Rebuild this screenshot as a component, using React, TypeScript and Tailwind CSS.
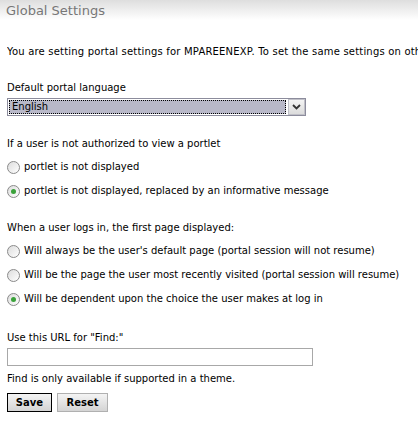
const font = { fontFamily: '"DejaVu Sans", Verdana, sans-serif' };

function Radio({ checked, label }: { checked?: boolean; label: string }) {
  return (
    <div className="flex h-[24px] items-center gap-[4px]">
      <span className="flex h-[13px] w-[13px] items-center justify-center rounded-full border border-[#8a8a8a] bg-gradient-to-br from-[#dcdcdc] to-white">
        {checked && <span className="h-[5px] w-[5px] rounded-full bg-[#3aa23a]" />}
      </span>
      <span>{label}</span>
    </div>
  );
}

export default function App() {
  return (
    <div className="h-[423px] w-[418px] overflow-hidden bg-white text-[10px] leading-[12px] text-black" style={font}>
      <div className="h-[20px] bg-gradient-to-b from-[#dedede] to-white pl-[6px] pt-[2px] text-[13px] leading-[17px] text-[#777]">
        Global Settings
      </div>
      <div className="px-[7px]">
        <p className="-mr-[7px] mt-[26px] overflow-hidden whitespace-nowrap tracking-[0.19px]">
          You are setting portal settings for MPAREENEXP. To set the same settings on other portals
        </p>
        <p className="mt-[24px]">Default portal language</p>
        <div className="mt-[4px] flex h-[18px] w-[299px] items-center border border-[#8c8c9c] bg-white">
          <div className="ml-[1px] flex h-[14px] flex-1 items-center border border-dotted border-black bg-[#b8b8c8] pl-[2px]">
            English
          </div>
          <div className="ml-[2px] flex h-[16px] w-[17px] items-center justify-center border border-[#c0c0c8] bg-gradient-to-b from-[#f4f4f4] to-[#dcdcdc]">
            <svg width="9" height="6" viewBox="0 0 9 6">
              <path d="M1 1 L4.5 4.5 L8 1" fill="none" stroke="#333" strokeWidth="1.8" />
            </svg>
          </div>
        </div>
        <p className="mt-[22px]">If a user is not authorized to view a portlet</p>
        <div className="mt-[5px]">
          <Radio label="portlet is not displayed" />
          <Radio checked label="portlet is not displayed, replaced by an informative message" />
        </div>
        <p className="mt-[19px]">When a user logs in, the first page displayed:</p>
        <div className="mt-[5px]">
          <Radio label="Will always be the user's default page (portal session will not resume)" />
          <Radio label="Will be the page the user most recently visited (portal session will resume)" />
          <Radio checked label="Will be dependent upon the choice the user makes at log in" />
        </div>
        <p className="mt-[21px]">Use this URL for "Find:"</p>
        <input className="mt-[4px] block h-[18px] w-[306px] border border-[#a8a8a8] bg-white outline-none" />
        <p className="mt-[7px]">Find is only available if supported in a theme.</p>
        <div className="mt-[8px] flex gap-[5px]">
          <button className="h-[19px] w-[45px] border border-black bg-gradient-to-b from-[#f4f4f4] to-[#d4d4d4] text-[10px] font-bold" style={font}>
            Save
          </button>
          <button className="h-[19px] w-[51px] border border-[#b0b0b0] bg-gradient-to-b from-[#f4f4f4] to-[#d4d4d4] text-[10px] font-bold" style={font}>
            Reset
          </button>
        </div>
      </div>
    </div>
  );
}
